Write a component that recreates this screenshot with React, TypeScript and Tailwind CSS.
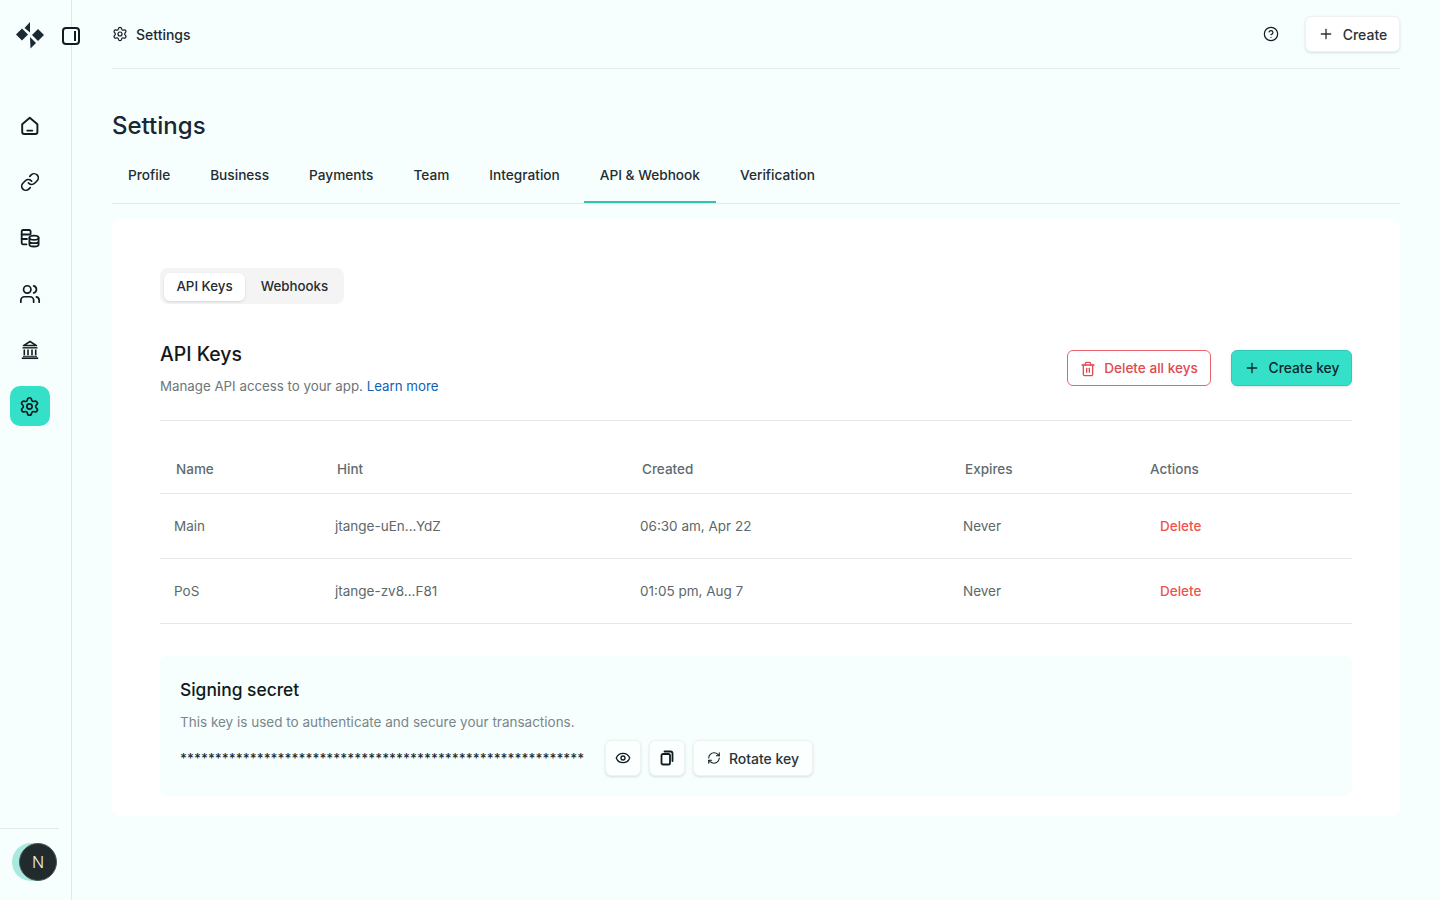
import { CircleHelp, Eye, Link, Plus, RefreshCw, Settings, Trash2, Users } from "lucide-react";

const font = { fontFamily: '"Inter", "Noto Sans", sans-serif' };

const tabs = ["Profile", "Business", "Payments", "Team", "Integration", "API & Webhook", "Verification"];

const keys = [
  { name: "Main", hint: "jtange-uEn...YdZ", created: "06:30 am, Apr 22", expires: "Never" },
  { name: "PoS", hint: "jtange-zv8...F81", created: "01:05 pm, Aug 7", expires: "Never" },
];

function Logo() {
  return (
    <svg width="28" height="28" viewBox="0 0 28 28" fill="#1b2a30">
      <path d="M0 13.5 L6 7.5 L12 13.5 L6 19.5 Z" />
      <path d="M16 14 L22 8 L28 14 L22 20 Z" />
      <path d="M14 1 L14 11.5 L8.5 7 Z" />
      <path d="M14 16 L20 22 L14.5 27.5 Z" />
    </svg>
  );
}

function HomeIcon() {
  return (
    <svg width="20" height="20" viewBox="0 0 20 20" fill="none" stroke="#111c21" strokeWidth="1.9" strokeLinejoin="round" strokeLinecap="round">
      <path d="M2.2 8.2 L9.8 1.8 L17.4 8.2 V16 a2 2 0 0 1 -2 2 H4.2 a2 2 0 0 1 -2 -2 Z" />
      <path d="M7.3 14.6 H12.3" />
    </svg>
  );
}

function CoinsIcon() {
  return (
    <svg width="20" height="20" viewBox="0 0 20 20" fill="none" stroke="#111c21" strokeWidth="1.8" strokeLinecap="round">
      <path d="M9 2 H3 a1.3 1.3 0 0 0 -1.3 1.3 V15 a1.3 1.3 0 0 0 1.3 1.3 H6.5" />
      <path d="M1.7 6.5 H9.5 M1.7 11 H7" />
      <path d="M9 2 a1.6 1.6 0 0 1 1.6 1.6 V6" />
      <ellipse cx="14" cy="9.8" rx="4.6" ry="2.1" />
      <path d="M9.4 9.8 V16.4 C9.4 17.6 11.5 18.5 14 18.5 S18.6 17.6 18.6 16.4 V9.8 M9.4 13.2 C9.4 14.3 11.5 15.2 14 15.2 S18.6 14.3 18.6 13.2" />
    </svg>
  );
}

function BankIcon() {
  return (
    <svg width="20" height="20" viewBox="0 0 20 20" fill="none" stroke="#111c21" strokeLinecap="butt">
      <path d="M10 1.5 L16.5 5.6 H3.5 Z" strokeWidth="1.5" strokeLinejoin="round" />
      <path d="M2.5 7.8 H17.5" strokeWidth="1.4" />
      <path d="M4.3 9.5 V15.2 M8 9.5 V15.2 M12 9.5 V15.2 M15.7 9.5 V15.2" strokeWidth="1.6" />
      <path d="M3 16.3 H17" strokeWidth="1" />
      <path d="M1.8 18.2 H18.2" strokeWidth="1.7" />
    </svg>
  );
}

function CopyIcon() {
  return (
    <svg width="16" height="16" viewBox="0 0 16 16" fill="none" stroke="#111c21" strokeWidth="1.8" strokeLinecap="round" strokeLinejoin="round">
      <rect x="2.5" y="4" width="8.5" height="10.5" rx="1.6" />
      <path d="M5.5 1.5 H11.5 a2 2 0 0 1 2 2 V11" />
    </svg>
  );
}

function NavItem({ children, active }: { children: React.ReactNode; active?: boolean }) {
  return (
    <div className={`flex h-10 w-10 items-center justify-center rounded-[10px] pr-px ${active ? "bg-[#34e0c8]" : ""}`}>
      {children}
    </div>
  );
}

function Sidebar() {
  return (
    <aside className="relative flex h-[900px] w-[72px] shrink-0 flex-col border-r border-[#dfe9e9]">
      <div className="flex h-[70px] items-center pl-4">
        <Logo />
      </div>
      <div className="absolute left-[62px] top-[27px] h-[18px] w-[18px] rounded-[4px] border-2 border-[#111c21] bg-[#f6fffe]">
        <div className="absolute bottom-[2px] right-[2px] top-[2px] w-[2px] bg-[#111c21]" />
      </div>
      <nav className="mt-[36px] flex flex-col gap-4 pl-[10px]">
        <NavItem><HomeIcon /></NavItem>
        <NavItem><Link size={20} strokeWidth={2} color="#111c21" /></NavItem>
        <NavItem><CoinsIcon /></NavItem>
        <NavItem><Users size={22} strokeWidth={1.9} color="#111c21" /></NavItem>
        <NavItem><BankIcon /></NavItem>
        <NavItem active><Settings size={21} strokeWidth={1.9} color="#111c21" /></NavItem>
      </nav>
      <div className="mt-auto h-[72px] w-[59px] border-t border-[#e3eaea]">
        <div className="relative ml-3 mt-[14px] h-[38px] w-[45px]">
          <div className="absolute left-0 top-0 h-[38px] w-[38px] rounded-full bg-[#a9e9df]" />
          <div className="absolute left-[7px] top-0 flex h-[38px] w-[38px] items-center justify-center rounded-full border border-[#4a5658] bg-[#212b2d] text-[16px] font-light text-[#f0f0f0]">
            N
          </div>
        </div>
      </div>
    </aside>
  );
}

function Header() {
  return (
    <header className="flex h-[69px] items-center justify-between border-b border-[#e3ecec]">
      <div className="flex items-center gap-2 text-[14px] font-medium text-[#1b2a30]">
        <Settings size={16} strokeWidth={1.8} color="#111c21" />
        <span>Settings</span>
      </div>
      <div className="flex items-center gap-[26px]">
        <CircleHelp size={16} strokeWidth={1.8} color="#111c21" />
        <button className="flex h-9 w-[95px] items-center justify-center gap-[9px] rounded-[6px] border border-[#eef2f2] bg-white text-[14px] font-medium text-[#2b3338] shadow-sm">
          <Plus size={16} strokeWidth={2} />
          Create
        </button>
      </div>
    </header>
  );
}

function ApiKeysTable() {
  const cols = "grid grid-cols-[161px_305px_323px_185px_1fr] items-center";
  return (
    <div className="text-[13.5px]">
      <div className={`${cols} h-[73px] border-b border-[#e5e7e7] pt-[24px] font-medium text-[#5f6b6f]`}>
        <div className="pl-4">Name</div>
        <div className="pl-4">Hint</div>
        <div className="pl-4">Created</div>
        <div className="pl-4">Expires</div>
        <div className="pl-4">Actions</div>
      </div>
      {keys.map((k) => (
        <div key={k.name} className={`${cols} h-[65px] border-b border-[#e5e7e7] pt-[1px] text-[#5b686c]`}>
          <div className="pl-[14px]">{k.name}</div>
          <div className="pl-[14px]">{k.hint}</div>
          <div className="pl-[14px]">{k.created}</div>
          <div className="pl-[14px]">{k.expires}</div>
          <div className="pl-[26px] font-medium text-[#ef5350]">Delete</div>
        </div>
      ))}
    </div>
  );
}

function SigningSecret() {
  return (
    <section className="mt-8 h-[140px] rounded-[8px] bg-[#f6fffe] px-5 pt-[22px]">
      <h3 className="text-[17.4px] leading-6 font-medium text-[#10191c]">Signing secret</h3>
      <p className="mt-[10px] text-[13.5px] leading-5 text-[#7b8689]">This key is used to authenticate and secure your transactions.</p>
      <div className="mt-[8px] flex items-center">
        <span className="w-[425px] overflow-hidden text-[13.4px] leading-4 font-medium whitespace-nowrap text-[#1b2a30]">
          {"*".repeat(58)}
        </span>
        <div className="flex items-center gap-2">
          <button className="flex h-9 w-9 items-center justify-center rounded-[6px] border border-[#eef2f2] bg-[#fbfffe] shadow-sm">
            <Eye size={16} strokeWidth={2} color="#111c21" />
          </button>
          <button className="flex h-9 w-9 items-center justify-center rounded-[6px] border border-[#eef2f2] bg-[#fbfffe] shadow-sm">
            <CopyIcon />
          </button>
          <button className="flex h-9 w-[120px] items-center justify-center gap-2 rounded-[6px] border border-[#eef2f2] bg-[#fbfffe] text-[14px] font-medium text-[#2b3338] shadow-sm">
            <RefreshCw size={14} strokeWidth={1.8} color="#111c21" />
            Rotate key
          </button>
        </div>
      </div>
    </section>
  );
}

export default function App() {
  return (
    <div className="flex min-h-[900px] bg-[#f6fffe]" style={font}>
      <Sidebar />
      <main className="flex-1 pl-10 pr-10">
        <Header />
        <h1 className="mt-[41px] text-[24px] leading-8 font-medium text-[#1b2631]">Settings</h1>
        <div className="mt-[5px] flex gap-2 border-b border-[#e1eaea]">
          {tabs.map((t) => (
            <div
              key={t}
              className={`flex h-[56px] items-center px-4 text-[13.66px] font-medium text-[#252c30] ${t === "API & Webhook" ? "border-b-2 border-[#2fc4b2] pt-[2px]" : ""}`}
            >
              {t}
            </div>
          ))}
        </div>
        <div className="mt-[15px] h-[597px] rounded-[8px] bg-white px-12 pt-[49px]">
          <div className="flex h-9 w-[184px] items-center gap-1 rounded-[8px] bg-[#f4f4f4] p-1 pt-[5px] text-[13.3px] font-medium text-[#252c30]">
            <div className="flex h-7 w-[81px] items-center justify-center rounded-[6px] bg-white pt-px shadow-sm">API Keys</div>
            <div className="flex h-7 flex-1 items-center justify-center pt-px">Webhooks</div>
          </div>
          <div className="mt-[36px] flex items-center justify-between border-b border-[#e5e7e7] pb-[24px]">
            <div>
              <h2 className="text-[19.4px] leading-7 font-medium text-[#10191c]">API Keys</h2>
              <p className="mt-[8px] text-[13.3px] leading-5 text-[#6c7679]">
                Manage API access to your app. <span className="text-[#0f62b5]">Learn more</span>
              </p>
            </div>
            <div className="flex items-center gap-5">
              <button className="flex h-9 w-[144px] items-center justify-center gap-2 rounded-[6px] border border-[#e8636b] bg-white pt-px text-[13.6px] font-medium text-[#e04a50]">
                <Trash2 size={16} strokeWidth={2} />
                Delete all keys
              </button>
              <button className="flex h-9 w-[121px] items-center justify-center gap-[9px] rounded-[6px] border border-[#2fcab6] bg-[#34e0c8] text-[13.8px] font-medium text-[#10262a] shadow-sm">
                <Plus size={16} strokeWidth={2} />
                Create key
              </button>
            </div>
          </div>
          <ApiKeysTable />
          <SigningSecret />
        </div>
      </main>
    </div>
  );
}
